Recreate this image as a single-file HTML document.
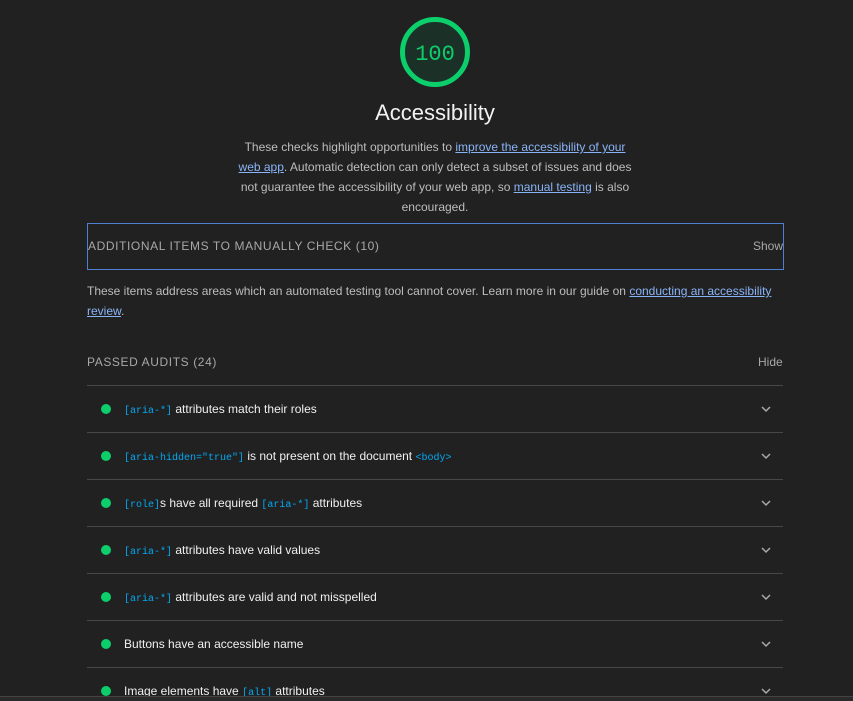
<!DOCTYPE html>
<html><head><style>
*{margin:0;padding:0;box-sizing:border-box}
html,body{width:853px;height:701px;overflow:hidden}
body{background:#212121;font-family:"Liberation Sans",sans-serif;color:#e0e0e0;position:relative}
.a{position:absolute}
a{color:#8ab4f8;text-decoration:underline}
.desc{left:233px;width:404px;top:137px;text-align:center;font-size:12px;line-height:20px;color:#bdbdbd}
.box{left:87px;top:223px;width:697px;height:47px;border:1px solid #4f7fd0;font-size:12px;letter-spacing:.6px;color:#a8a8a8}
.row{left:87px;width:696px;height:47px;border-top:1px solid #474747;font-size:12px;color:#f0f0f0}
.row .d{position:absolute;left:14px;top:18px;width:10px;height:10px;border-radius:50%;background:#0cce6b}
.row .t{position:absolute;left:37px;top:16px;white-space:nowrap}
.row .c{position:absolute;right:12px;top:19px}
code{font-family:"Liberation Mono",monospace;font-size:10px;color:#03a9f4}
</style></head><body>
<svg class="a" style="left:399px;top:16px" width="72" height="72"><circle cx="36" cy="36" r="32.5" fill="#1b3127" stroke="#0cce6b" stroke-width="5"/><text x="36" y="44" text-anchor="middle" font-family="Liberation Mono,monospace" font-size="22" fill="#0cce6b">100</text></svg>
<div class="a" style="left:0;width:870px;top:100px;text-align:center;font-size:22px;color:#f2f2f2">Accessibility</div>
<div class="a desc">These checks highlight opportunities to <a>improve the accessibility of your</a> <a>web app</a>. Automatic detection can only detect a subset of issues and does not guarantee the accessibility of your web app, so <a>manual testing</a> is also encouraged.</div>
<div class="a box"><span class="a" style="left:0;top:15px">ADDITIONAL ITEMS TO MANUALLY CHECK (10)</span><span class="a" style="right:0;top:15px;letter-spacing:0">Show</span></div>
<div class="a" style="left:87px;top:281px;width:700px;font-size:12px;line-height:20px;color:#bdbdbd">These items address areas which an automated testing tool cannot cover. Learn more in our guide on <a>conducting an accessibility review</a>.</div>
<div class="a" style="left:87px;top:355px;font-size:12px;letter-spacing:.6px;color:#a8a8a8">PASSED AUDITS (24)</div>
<div class="a" style="left:758px;top:355px;font-size:12px;color:#a8a8a8">Hide</div>
<div class="a row" style="top:385px"><i class="d"></i><span class="t"><code>[aria-*]</code> attributes match their roles</span><svg class="c" width="10" height="8"><path d="M1 2l4 4 4-4" stroke="#aaa" fill="none" stroke-width="1.5"/></svg></div>
<div class="a row" style="top:432px"><i class="d"></i><span class="t"><code>[aria-hidden="true"]</code> is not present on the document <code>&lt;body&gt;</code></span><svg class="c" width="10" height="8"><path d="M1 2l4 4 4-4" stroke="#aaa" fill="none" stroke-width="1.5"/></svg></div>
<div class="a row" style="top:479px"><i class="d"></i><span class="t"><code>[role]</code>s have all required <code>[aria-*]</code> attributes</span><svg class="c" width="10" height="8"><path d="M1 2l4 4 4-4" stroke="#aaa" fill="none" stroke-width="1.5"/></svg></div>
<div class="a row" style="top:526px"><i class="d"></i><span class="t"><code>[aria-*]</code> attributes have valid values</span><svg class="c" width="10" height="8"><path d="M1 2l4 4 4-4" stroke="#aaa" fill="none" stroke-width="1.5"/></svg></div>
<div class="a row" style="top:573px"><i class="d"></i><span class="t"><code>[aria-*]</code> attributes are valid and not misspelled</span><svg class="c" width="10" height="8"><path d="M1 2l4 4 4-4" stroke="#aaa" fill="none" stroke-width="1.5"/></svg></div>
<div class="a row" style="top:620px"><i class="d"></i><span class="t">Buttons have an accessible name</span><svg class="c" width="10" height="8"><path d="M1 2l4 4 4-4" stroke="#aaa" fill="none" stroke-width="1.5"/></svg></div>
<div class="a row" style="top:667px"><i class="d"></i><span class="t">Image elements have <code>[alt]</code> attributes</span><svg class="c" width="10" height="8"><path d="M1 2l4 4 4-4" stroke="#aaa" fill="none" stroke-width="1.5"/></svg></div>
<div class="a" style="left:0;top:696px;width:853px;height:5px;background:#2a2a2a;border-top:1px solid #444"></div>
</body></html>
